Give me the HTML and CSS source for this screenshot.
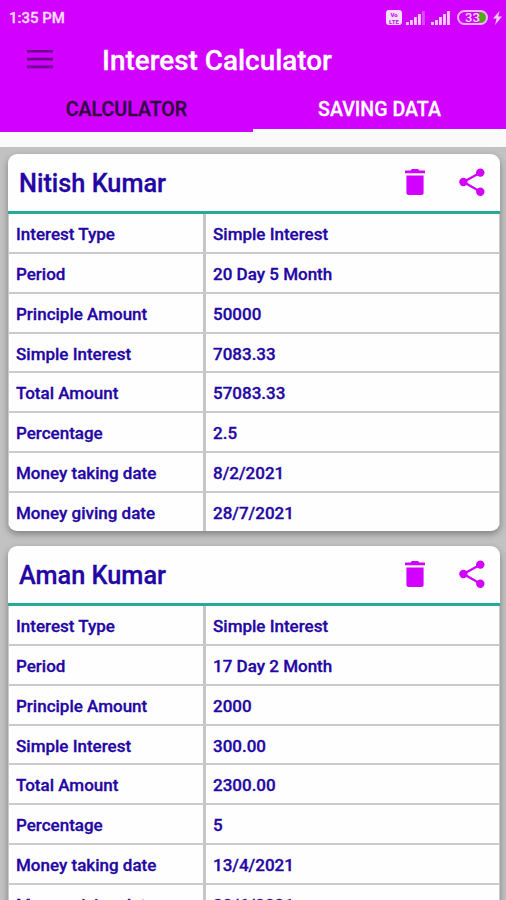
FILE: index.html
```html
<!Doctype html>
<html lang = "en">
	<head>
		<meta charset = "utf-8"/>
		<meta name = "viewport" content = "width=device-width, initial-scale=1"/>
		<title>Interest Calculator</title>
		<!-- The web page styles-->
		<link rel="stylesheet" href="styles.css">
	</head>
	<body>
		<!-- Top area-->
		<header class = "app-header">
			<!--Status bar-->
			<div class = "status-bar">
				<span class = "clock">1:35 PM</span>
				<div class = "volte"><span>Vo</span><span>LTE</span></div>
				<svg class = "signal" viewBox = "0 0 20 14" width = "20" height = "14">
					<path d = "M0,11h2.9v3H0zM4,9h2.9v5H4zM8,6h2.9v8H8zM12,3h2.9v11H12z"/>
					<path d = "M16,0h2.9v14H16z" opacity = "0.35"/>
				</svg>
				<svg class = "signal second" viewBox = "0 0 20 14" width = "20" height = "14">
					<path d = "M0,11h2.9v3H0zM4,9h2.9v5H4zM8,6h2.9v8H8zM12,3h2.9v11H12zM16,0h2.9v14H16z"/>
				</svg>
				<div class = "battery"><span>33</span></div>
				<svg class = "bolt" viewBox = "0 0 9 14" width = "9" height = "14">
					<path d = "M6.5,0L0,7.6h3.6L2,14L9,5.6H5.2z"/>
				</svg>
			</div>
			<!--Title bar-->
			<div class = "toolbar">
				<svg class = "menu-icon" viewBox = "0 0 26 19" width = "26" height = "19">
					<path d = "M0,0h26v2.6H0zM0,7.8h26v2.6H0zM0,15.6h26v2.6H0z"/>
				</svg>
				<h1>Interest Calculator</h1>
			</div>
			<!--Tabs-->
			<nav class = "tabs">
				<div class = "tab">CALCULATOR</div>
				<div class = "tab active">SAVING DATA</div>
			</nav>
		</header>
		<!-- Saved data-->
		<main class = "saved-list">
			<section class = "card">
				<div class = "card-head">
					<h2>Nitish Kumar</h2>
					<svg class = "delete-icon" viewBox = "0 0 20 26" width = "20" height = "26">
						<path d = "M1.4,6.5h17.2v17q0,2.5-2.5,2.5H3.9q-2.5,0-2.5-2.5zM0,1.5h5.5L7,0h6l1.5,1.5H20v2.7H0z"/>
					</svg>
					<svg class = "share-icon" viewBox = "0 0 26 28" width = "26" height = "28">
						<path class = "links" d = "M21.5,4.5L4.5,14L21.5,23.7"/>
						<circle cx = "21.3" cy = "4.6" r = "4.2"/><circle cx = "4.4" cy = "14" r = "4.2"/><circle cx = "21.3" cy = "23.7" r = "4.2"/>
					</svg>
				</div>
				<div class = "row"><span>Interest Type</span><span>Simple Interest</span></div>
				<div class = "row"><span>Period</span><span>20 Day 5 Month</span></div>
				<div class = "row"><span>Principle Amount</span><span>50000</span></div>
				<div class = "row"><span>Simple Interest</span><span>7083.33</span></div>
				<div class = "row"><span>Total Amount</span><span>57083.33</span></div>
				<div class = "row"><span>Percentage</span><span>2.5</span></div>
				<div class = "row"><span>Money taking date</span><span>8/2/2021</span></div>
				<div class = "row"><span>Money giving date</span><span>28/7/2021</span></div>
			</section>
			<section class = "card">
				<div class = "card-head">
					<h2>Aman Kumar</h2>
					<svg class = "delete-icon" viewBox = "0 0 20 26" width = "20" height = "26">
						<path d = "M1.4,6.5h17.2v17q0,2.5-2.5,2.5H3.9q-2.5,0-2.5-2.5zM0,1.5h5.5L7,0h6l1.5,1.5H20v2.7H0z"/>
					</svg>
					<svg class = "share-icon" viewBox = "0 0 26 28" width = "26" height = "28">
						<path class = "links" d = "M21.5,4.5L4.5,14L21.5,23.7"/>
						<circle cx = "21.3" cy = "4.6" r = "4.2"/><circle cx = "4.4" cy = "14" r = "4.2"/><circle cx = "21.3" cy = "23.7" r = "4.2"/>
					</svg>
				</div>
				<div class = "row"><span>Interest Type</span><span>Simple Interest</span></div>
				<div class = "row"><span>Period</span><span>17 Day 2 Month</span></div>
				<div class = "row"><span>Principle Amount</span><span>2000</span></div>
				<div class = "row"><span>Simple Interest</span><span>300.00</span></div>
				<div class = "row"><span>Total Amount</span><span>2300.00</span></div>
				<div class = "row"><span>Percentage</span><span>5</span></div>
				<div class = "row"><span>Money taking date</span><span>13/4/2021</span></div>
				<div class = "row"><span>Money giving date</span><span>30/6/2021</span></div>
			</section>
		</main>
	</body>
</html>
```

FILE: styles.css
```css
* {
	box-sizing: border-box;
}

/*Basic body design*/
body {
	font-family: Roboto, "Liberation Sans", sans-serif;
	-webkit-text-stroke: 0.3px currentColor;
	background-color: #fafafa;
	flex-direction: column;
	font-weight: 500;
	overflow: hidden;
	display: flex;
	height: 900px;
	margin: 0;
}

h1, h2 {
	font-weight: 500;
	margin: 0;
}

/*Top area*/
.app-header {
	background-color: #d200ff;
	flex: none;
	height: 132px;
	color: #fff;
}

/*Status bar*/
.status-bar {
	align-items: center;
	padding: 0 4px 0 9px;
	display: flex;
	height: 35px;
	color: #fbdcff;
	fill: #fbc8ff;
}

.clock {
	font-size: 15px;
	margin-right: auto;
}

.volte {
	-webkit-text-stroke: 0;
	background-color: #fbdcff;
	flex-direction: column;
	justify-content: center;
	align-items: center;
	border-radius: 3px;
	margin-right: 4px;
	font-weight: 900;
	line-height: 7px;
	color: #b52ad8;
	display: flex;
	font-size: 6px;
	height: 15px;
	width: 16px;
}

.signal.second {
	margin: 0 6px 0 5px;
}

.battery {
	background: linear-gradient(to right, transparent 20px, #57a51c 20px);
	-webkit-text-stroke: 0;
	border: 2px solid #f3b5ff;
	justify-content: center;
	align-items: center;
	border-radius: 8px;
	margin-right: 5px;
	font-size: 13px;
	display: flex;
	height: 15px;
	width: 31px;
}

/*Title bar*/
.toolbar {
	align-items: center;
	padding-left: 27px;
	display: flex;
	height: 50px;
	gap: 49px;
}

.toolbar h1 {
	font-size: 27.9px;
}

.menu-icon {
	transform: translateY(-1px);
	fill: #6c078d;
}

/*Tabs*/
.tabs {
	display: flex;
	height: 47px;
}

.tab {
	justify-content: center;
	align-items: center;
	padding-top: 1px;
	font-size: 19.6px;
	display: flex;
	color: #30063f;
	width: 50%;
}

.tab.active {
	border-bottom: 3px solid #fff;
	padding-top: 4px;
	color: #fff;
}

/*Saved data*/
.saved-list {
	background-color: #c2c2c2;
	padding: 6.5px 6.5px 0 8px;
	flex-direction: column;
	margin-top: 15px;
	overflow: hidden;
	display: flex;
	gap: 14.5px;
	flex: 1;
}

.card {
	box-shadow: 0 3px 7px rgba(0, 0, 0, 0.35);
	background-color: #fefefe;
	border-radius: 9px;
	overflow: hidden;
	color: #2406a4;
	flex: none;
}

.card-head {
	border-bottom: 3px solid #25a99b;
	padding: 0 15px 0 11px;
	align-items: center;
	display: flex;
	height: 60.5px;
	fill: #d200ff;
}

.card-head h2 {
	margin-right: auto;
	padding-top: 2px;
	font-size: 25.3px;
}

.share-icon {
	margin-left: 34px;
}

.share-icon .links {
	stroke: #d200ff;
	stroke-width: 2.3;
	fill: none;
}

/*Label and value*/
.row {
	border-bottom: 2px solid #cbcbcb;
	grid-template-columns: 197px 1fr;
	border-right: 1px solid #cbcbcb;
	border-left: 1px solid #cbcbcb;
	height: 39.86px;
	font-size: 17px;
	display: grid;
}

.row:last-child {
	border-bottom: none;
	height: 38px;
}

.row span {
	align-items: center;
	padding: 2px 0 0 7px;
	display: flex;
}

.row span:first-child {
	border-right: 3px solid #c6c6c6;
}
```
